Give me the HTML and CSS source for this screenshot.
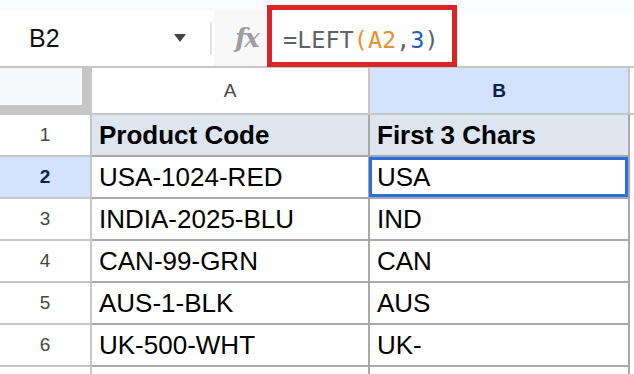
FILE: index.html
```html
<!DOCTYPE html>
<html lang="en">
  <head>
    <meta charset="UTF-8" />
    <meta name="viewport" content="width=device-width, initial-scale=1.0" />
    <title>LEFT formula</title>
    <link rel="stylesheet" href="styles.css">
  </head>
  <body>
    <div class="toolbar">
      <div class="namebox">
        <span class="ref">B2</span>
        <span class="caret"></span>
        <span class="sep"></span>
      </div>
      <div class="fx">fx</div>
      <div class="formula">
        <span class="fn">=LEFT</span><span class="arg">(A2</span><span class="fn">,</span><span class="num">3</span><span class="fn">)</span>
      </div>
      <!-- annotation around the formula -->
      <div class="highlight"></div>
    </div>

    <div class="sheet">
      <div class="corner"><div class="corner-inner"></div></div>
      <div class="colhead">A</div>
      <div class="colhead active">B</div>
      <div class="filler head"></div>

      <div class="rowhead">1</div>
      <div class="cell title">Product Code</div>
      <div class="cell title">First 3 Chars</div>
      <div class="filler"></div>

      <div class="rowhead active">2</div>
      <div class="cell">USA-1024-RED</div>
      <div class="cell selected">USA</div>
      <div class="filler"></div>

      <div class="rowhead">3</div>
      <div class="cell">INDIA-2025-BLU</div>
      <div class="cell">IND</div>
      <div class="filler"></div>

      <div class="rowhead">4</div>
      <div class="cell">CAN-99-GRN</div>
      <div class="cell">CAN</div>
      <div class="filler"></div>

      <div class="rowhead">5</div>
      <div class="cell">AUS-1-BLK</div>
      <div class="cell">AUS</div>
      <div class="filler"></div>

      <div class="rowhead">6</div>
      <div class="cell">UK-500-WHT</div>
      <div class="cell">UK-</div>
      <div class="filler"></div>

      <div class="rowhead"></div>
      <div class="cell"></div>
      <div class="cell"></div>
      <div class="filler"></div>
    </div>
  </body>
</html>
```

FILE: styles.css
```css
* {
  box-sizing: border-box;
}
body {
  margin: 0;
  background: #fff;
  font-family: "Liberation Sans", Arial, sans-serif;
  overflow: hidden;
  width: 634px;
  height: 374px;
}
.toolbar {
  position: relative;
  display: flex;
  height: 68px;
  padding-top: 10px;
  background: #f9fbfd;
  border-bottom: 2px solid #c7c7c7;
}
.namebox {
  width: 214px;
  display: flex;
  align-items: center;
  padding-left: 29px;
  background: #fff;
}
.ref {
  font-size: 25px;
  color: #111;
}
.caret {
  margin-left: auto;
  width: 0;
  height: 0;
  border-left: 6px solid transparent;
  border-right: 6px solid transparent;
  border-top: 8px solid #444;
}
.sep {
  width: 2px;
  height: 33px;
  margin-left: 24px;
  margin-right: 2px;
  background: #dde3ea;
}
.fx {
  width: 53px;
  padding-left: 21px;
  display: flex;
  align-items: center;
  background: #f8f8f8;
  font-family: "DejaVu Serif", serif;
  font-style: italic;
  font-weight: bold;
  font-size: 26px;
  color: #9e9e9e;
  letter-spacing: -2px;
}
.formula {
  flex: 1;
  display: flex;
  align-items: center;
  padding-left: 16px;
  margin-top: 3px;
  background: #fff;
  font-family: "DejaVu Sans Mono", monospace;
  font-size: 23.5px;
}
.fn {
  color: #5f6368;
}
.arg {
  color: #e8912d;
}
.num {
  color: #1b5fc6;
}
.highlight {
  position: absolute;
  left: 267px;
  top: 5px;
  width: 190px;
  height: 62px;
  border: 5px solid #da2528;
}
.sheet {
  display: grid;
  grid-template-columns: 92px 278px 260px 1fr;
  grid-template-rows: 47px;
  grid-auto-rows: 42px;
  height: 306px;
  overflow: hidden;
}
.corner {
  background: #c6c6c6;
  border-bottom: 2px solid #c6c6c6;
}
.corner-inner {
  width: 82px;
  height: 37px;
  background: #f8f9fa;
}
.colhead {
  display: flex;
  align-items: center;
  justify-content: center;
  background: #fff;
  border-right: 2px solid #c6c6c6;
  border-bottom: 2px solid #c6c6c6;
  font-size: 19px;
  color: #444746;
}
.colhead.active,
.rowhead.active {
  background: #d3e3fd;
  color: #0b2152;
  font-weight: bold;
}
.rowhead {
  display: flex;
  align-items: center;
  justify-content: center;
  border-right: 2px solid #c6c6c6;
  border-bottom: 2px solid #c6c6c6;
  font-size: 19px;
  color: #444746;
}
.filler.head {
  border-bottom: 2px solid #c6c6c6;
}
.cell {
  position: relative;
  display: flex;
  align-items: center;
  padding-left: 7px;
  border-right: 2px solid #a8a8a8;
  border-bottom: 2px solid #a8a8a8;
  font-size: 26px;
  color: #000;
  white-space: nowrap;
}
.cell.title {
  background: #dde5ef;
  font-weight: bold;
}
.cell.selected::after {
  content: "";
  position: absolute;
  top: 0;
  left: -1px;
  right: 0;
  bottom: 0;
  border: 3px solid #2a6ee3;
}
```
